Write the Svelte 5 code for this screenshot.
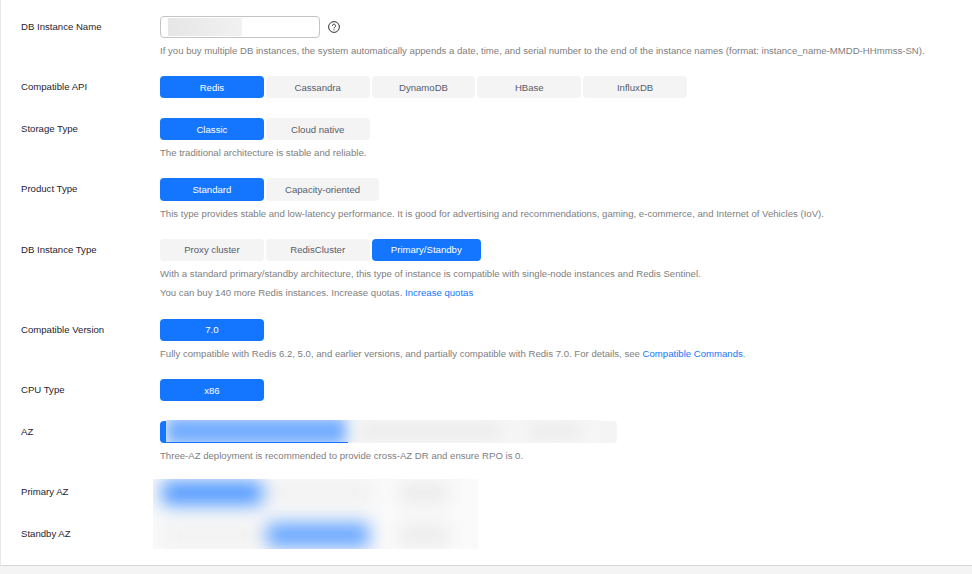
<script>
  const rows = [
    {
      label: "Compatible API",
      options: ["Redis", "Cassandra", "DynamoDB", "HBase", "InfluxDB"],
      active: "Redis"
    },
    {
      label: "Storage Type",
      options: ["Classic", "Cloud native"],
      active: "Classic",
      hint: "The traditional architecture is stable and reliable."
    },
    {
      label: "Product Type",
      options: ["Standard", "Capacity-oriented"],
      active: "Standard",
      hint: "This type provides stable and low-latency performance. It is good for advertising and recommendations, gaming, e-commerce, and Internet of Vehicles (IoV)."
    }
  ];

  const cpuType = { label: "CPU Type", options: ["x86"], active: "x86" };
</script>

{#snippet options(row)}
  <div class="options">
    {#each row.options as name}
      <button class="option" class:active={name === row.active}>{name}</button>
    {/each}
  </div>
{/snippet}

<main class="card">
  <div class="row">
    <div class="label">DB Instance Name</div>
    <div class="control">
      <div class="name-line">
        <div class="name-input"><span class="redacted"></span></div>
        <svg class="help" viewBox="0 0 12 12" width="12" height="12" fill="none" stroke="#333" stroke-width="1">
          <circle cx="6" cy="6" r="5.4" />
          <path d="M4.4 4.8a1.6 1.6 0 1 1 2.5 1.3c-.6.4-.9.7-.9 1.3" />
          <path d="M6 8.3v1" />
        </svg>
      </div>
      <p class="hint">If you buy multiple DB instances, the system automatically appends a date, time, and serial number to the end of the instance names (format: instance_name-MMDD-HHmmss-SN).</p>
    </div>
  </div>

  {#each rows as row}
    <div class="row" class:bare={!row.hint}>
      <div class="label">{row.label}</div>
      <div class="control">
        {@render options(row)}
        {#if row.hint}
          <p class="hint">{row.hint}</p>
        {/if}
      </div>
    </div>
  {/each}

  <div class="row">
    <div class="label">DB Instance Type</div>
    <div class="control">
      {@render options({ options: ["Proxy cluster", "RedisCluster", "Primary/Standby"], active: "Primary/Standby" })}
      <p class="hint">With a standard primary/standby architecture, this type of instance is compatible with single-node instances and Redis Sentinel.</p>
      <p class="hint next">You can buy 140 more Redis instances. Increase quotas. <a href="#quotas">Increase quotas</a></p>
    </div>
  </div>

  <div class="row">
    <div class="label">Compatible Version</div>
    <div class="control">
      {@render options({ options: ["7.0"], active: "7.0" })}
      <p class="hint">Fully compatible with Redis 6.2, 5.0, and earlier versions, and partially compatible with Redis 7.0. For details, see <a href="#commands">Compatible Commands</a>.</p>
    </div>
  </div>

  <div class="row bare">
    <div class="label">{cpuType.label}</div>
    <div class="control">{@render options(cpuType)}</div>
  </div>

  <div class="row">
    <div class="label">AZ</div>
    <div class="control">
      <div class="az">
        <div class="az-selected"></div>
        <div class="az-smear">
          <div class="az-blur">
            <span class="blue"></span>
            <span class="grey"></span>
            <span class="grey short"></span>
          </div>
        </div>
      </div>
      <p class="hint">Three-AZ deployment is recommended to provide cross-AZ DR and ensure RPO is 0.</p>
    </div>
  </div>

  <div class="row bare">
    <div class="az-labels">
      <div class="label">Primary AZ</div>
      <div class="label">Standby AZ</div>
    </div>
    <div class="zones">
      <div class="zones-blur">
        <span class="zone blue"></span>
        <span class="zone"></span>
        <span class="zone faint"></span>
        <span class="zone"></span>
        <span class="zone blue soft"></span>
        <span class="zone faint"></span>
      </div>
    </div>
  </div>
</main>

<style>
  :global(body) {
    background: #f4f4f4;
    height: 574px;
    overflow: hidden;
  }

  .card {
    box-sizing: border-box;
    height: 566px;
    padding: 15.6px 0 0 20px;
    background: #fff;
    border-left: 1px solid #e9e9e9;
    border-bottom: 1px solid #d6d6d6;
    font-family: "Liberation Sans", Arial, sans-serif;
    font-size: 9.6px;
    color: #1f2430;
  }

  .row {
    display: flex;
    margin-bottom: 15.6px;
  }

  .row.bare {
    margin-bottom: 19.6px;
  }

  .label {
    width: 139px;
    height: 22.4px;
    line-height: 22.4px;
    flex: none;
  }

  .name-line {
    display: flex;
    align-items: center;
    gap: 8px;
  }

  .name-input {
    box-sizing: border-box;
    width: 160px;
    height: 22.4px;
    padding: 1px 0 1px 7px;
    border: 1px solid #c4c4c4;
    border-radius: 4px;
  }

  .redacted {
    display: block;
    width: 74px;
    height: 100%;
    background: linear-gradient(90deg, #e6e6e6, #ececec 55%, #f1f1f1);
  }

  .help {
    display: block;
  }

  .options {
    display: flex;
    gap: 2px;
  }

  .option {
    box-sizing: border-box;
    min-width: 103.8px;
    height: 22.4px;
    padding: 0 19.2px;
    border: none;
    border-radius: 4px;
    background: #f4f4f4;
    color: #575d6c;
    font: inherit;
  }

  .option.active {
    background: #1476ff;
    color: #fff;
  }

  .hint {
    margin: 2.8px 0 0;
    line-height: 19.6px;
    color: #808080;
    white-space: nowrap;
  }

  .hint.next {
    margin-top: 0;
  }

  a {
    color: #1476ff;
    text-decoration: none;
  }

  .az {
    position: relative;
    width: 457px;
    height: 22.4px;
    background: #f4f4f4;
    border-radius: 4px;
  }

  .az-selected {
    width: 188px;
    height: 100%;
    background: #1476ff;
    border-radius: 4px 0 0 4px;
  }

  .az-smear {
    position: absolute;
    left: 6px;
    top: -1px;
    width: 434px;
    height: 22.4px;
    overflow: hidden;
    background: #f6f6f6;
  }

  .az-blur {
    display: flex;
    height: 100%;
    filter: blur(7px);
  }

  .az-blur .blue {
    width: 180px;
    margin: -3px 0;
    background: #74adff;
  }

  .az-blur .grey {
    width: 140px;
    margin: 3px 0 3px 14px;
    background: #ececec;
  }

  .az-blur .short {
    width: 50px;
    margin-left: 30px;
  }

  .az-labels {
    flex: none;
    display: flex;
    flex-direction: column;
    gap: 19.6px;
  }

  .zones {
    width: 325px;
    height: 70px;
    margin: -2px 0 -2px -7px;
    overflow: hidden;
    background: #fafafa;
  }

  .zones-blur {
    display: grid;
    grid-template-columns: 100px 108px 100px;
    grid-auto-rows: 24px;
    gap: 18px 2px;
    padding: 2px 0 0 9px;
    filter: blur(9px);
  }

  .zone {
    background: #f1f1f1;
  }

  .zone.faint {
    background: #eaeaea;
    margin: 2px 26px;
  }

  .zone.blue {
    background: #4f98ff;
  }

  .zone.soft {
    background: #62a3ff;
    margin: 0 3px;
  }
</style>
